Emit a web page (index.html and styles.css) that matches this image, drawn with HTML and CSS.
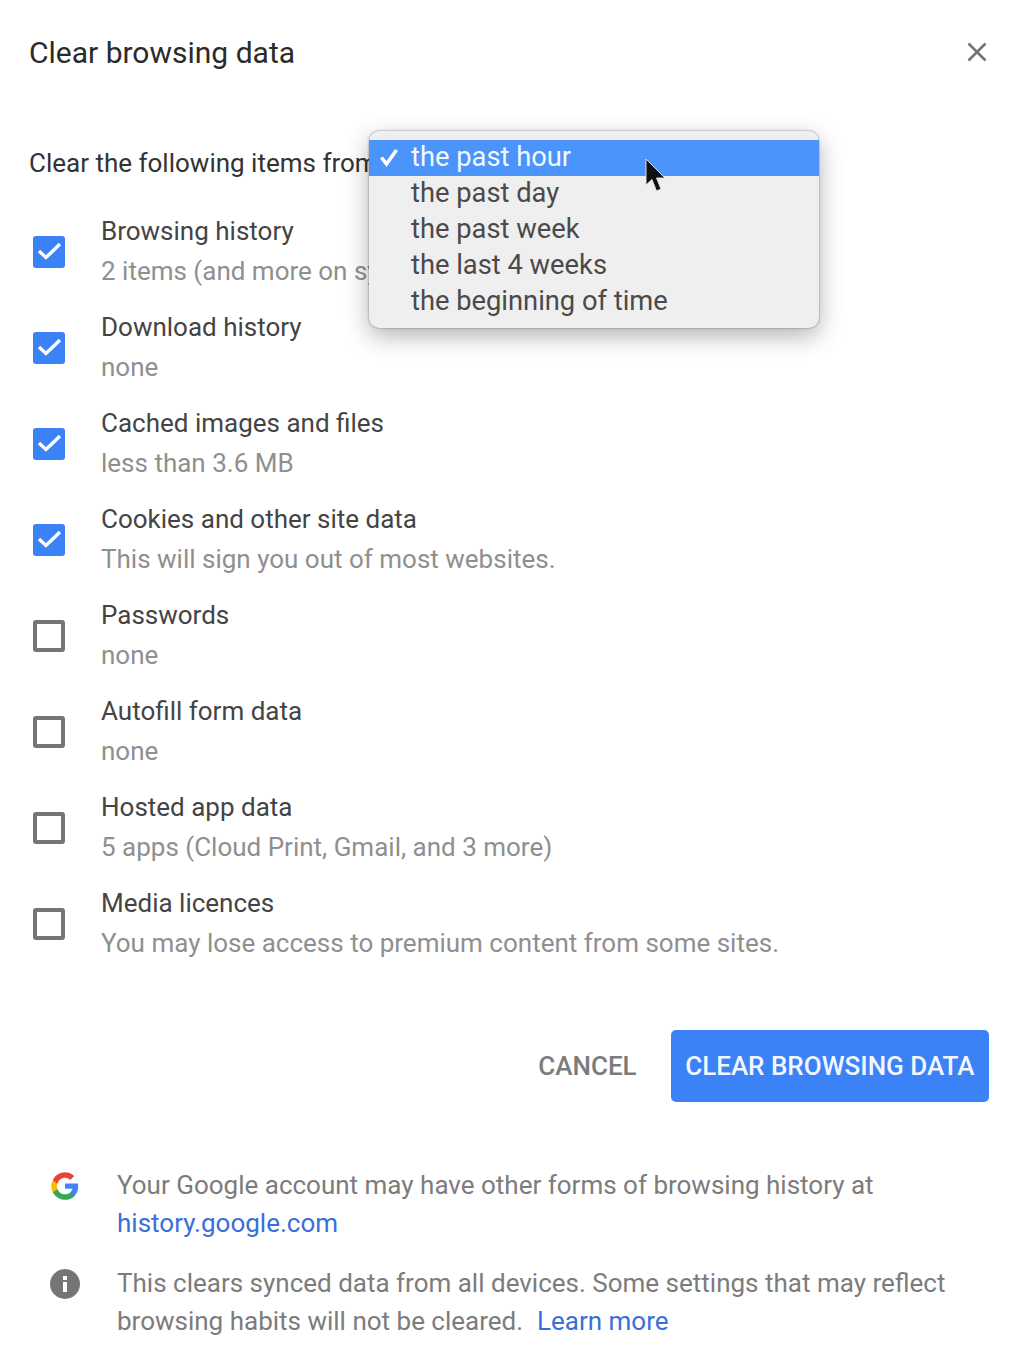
FILE: index.html
```html
<!DOCTYPE html>
<html lang="en">
<head>
    <meta charset="UTF-8">
    <meta name="viewport" content="width=device-width, initial-scale=1.0">
    <title>Clear browsing data</title>
    <link rel="stylesheet" href="styles.css">
</head>
<body>
    <div class="dialog">
        <div class="header">
            <h1>Clear browsing data</h1>
            <svg class="close" width="20" height="20" viewBox="0 0 20 20"><path d="M1.500 1.500L18.500 18.500M18.500 1.500L1.500 18.500" fill="none" stroke="#757575" stroke-width="2.600"/></svg>
        </div>

        <div class="range">Clear the following items from</div>

        <div class="items">
            <div class="item">
                <span class="box checked"><svg width="32" height="32" viewBox="0 0 32 32"><path d="M6 15L13 21.500L27 8" fill="none" stroke="#fff" stroke-width="3.400"/></svg></span>
                <div class="item-text"><div class="name">Browsing history</div><div class="sub">2 items (and more on synced devices)</div></div>
            </div>
            <div class="item">
                <span class="box checked"><svg width="32" height="32" viewBox="0 0 32 32"><path d="M6 15L13 21.500L27 8" fill="none" stroke="#fff" stroke-width="3.400"/></svg></span>
                <div class="item-text"><div class="name">Download history</div><div class="sub">none</div></div>
            </div>
            <div class="item">
                <span class="box checked"><svg width="32" height="32" viewBox="0 0 32 32"><path d="M6 15L13 21.500L27 8" fill="none" stroke="#fff" stroke-width="3.400"/></svg></span>
                <div class="item-text"><div class="name">Cached images and files</div><div class="sub">less than 3.6 MB</div></div>
            </div>
            <div class="item">
                <span class="box checked"><svg width="32" height="32" viewBox="0 0 32 32"><path d="M6 15L13 21.500L27 8" fill="none" stroke="#fff" stroke-width="3.400"/></svg></span>
                <div class="item-text"><div class="name">Cookies and other site data</div><div class="sub">This will sign you out of most websites.</div></div>
            </div>
            <div class="item">
                <span class="box"></span>
                <div class="item-text"><div class="name">Passwords</div><div class="sub">none</div></div>
            </div>
            <div class="item">
                <span class="box"></span>
                <div class="item-text"><div class="name">Autofill form data</div><div class="sub">none</div></div>
            </div>
            <div class="item">
                <span class="box"></span>
                <div class="item-text"><div class="name">Hosted app data</div><div class="sub">5 apps (Cloud Print, Gmail, and 3 more)</div></div>
            </div>
            <div class="item">
                <span class="box"></span>
                <div class="item-text"><div class="name">Media licences</div><div class="sub">You may lose access to premium content from some sites.</div></div>
            </div>
        </div>

        <div class="actions">
            <span class="cancel">CANCEL</span>
            <span class="clear">CLEAR BROWSING DATA</span>
        </div>

        <div class="notes">
            <div class="note">
                <svg class="note-icon" width="30" height="30" viewBox="0 0 48 48">
                    <path fill="#4285f4" d="M45.100 24.500c0-1.600-.1-3.100-.4-4.500H24v8.500h11.800c-.5 2.700-2.100 5-4.400 6.600v5.500h7.100c4.200-3.800 6.600-9.500 6.600-16.100z"/>
                    <path fill="#34a853" d="M24 46c5.900 0 10.900-2 14.500-5.400l-7.100-5.500c-2 1.300-4.500 2.100-7.400 2.100-5.700 0-10.500-3.800-12.200-9H4.500v5.700C8.100 41.100 15.500 46 24 46z"/>
                    <path fill="#fbbc05" d="M11.800 28.700c-.4-1.300-.7-2.800-.7-4.200s.3-2.900.7-4.200v-5.700H4.500C3 17.500 2 20.900 2 24.500s1 7 2.500 9.900l7.300-5.700z"/>
                    <path fill="#ea4335" d="M24 10.900c3.200 0 6.100 1.100 8.400 3.300l6.300-6.300C34.900 4.300 29.900 2 24 2 15.500 2 8.100 6.900 4.500 14.600l7.300 5.700c1.700-5.200 6.500-9.400 12.200-9.400z"/>
                </svg>
                <p>Your Google account may have other forms of browsing history at<br><a href="#">history.google.com</a></p>
            </div>
            <div class="note">
                <svg class="note-icon" width="30" height="30" viewBox="0 0 30 30">
                    <circle cx="15" cy="15" r="15" fill="#757575"/>
                    <rect x="13" y="13" width="4" height="10" fill="#fff"/>
                    <rect x="13" y="7" width="4" height="4" fill="#fff"/>
                </svg>
                <p>This clears synced data from all devices. Some settings that may reflect<br>browsing habits will not be cleared. &nbsp;<a class="learn" href="#">Learn more</a></p>
            </div>
        </div>
    </div>

    <!-- native select popup, sits on top of the dialog -->
    <div class="popup">
        <div class="opt active"><svg class="tick" width="20" height="20" viewBox="0 0 20 20"><path d="M2.500 10.500L7.500 17L17.500 3" fill="none" stroke="#fff" stroke-width="3.600"/></svg>the past hour</div>
        <div class="opt">the past day</div>
        <div class="opt">the past week</div>
        <div class="opt">the last 4 weeks</div>
        <div class="opt">the beginning of time</div>
    </div>
    <svg class="cursor" width="24" height="36" viewBox="0 0 24 36"><path d="M2 1V27L8 21.500L12.500 33L17 31L12.500 20H21Z" fill="#111" stroke="#ddd" stroke-width="1"/></svg>
</body>
</html>
```

FILE: styles.css
```css
body {
    margin: 0;
    background: #fff;
    font-family: Roboto, sans-serif;
    color: #333;
    overflow: hidden;
}
.dialog {
    padding: 32px 20px 0 29px;
}
.header {
    display: flex;
    justify-content: space-between;
    align-items: center;
    height: 40px;
}
.header h1 {
    margin: 0;
    font-size: 30px;
    font-weight: 400;
    color: #2b2b2b;
}
.close {
    margin-right: 2px;
}
.range {
    margin-top: 71px;
    height: 40px;
    line-height: 40px;
    font-size: 26px;
    color: #333;
    white-space: nowrap;
}
.items {
    margin-top: 20px;
}
.item {
    display: flex;
    align-items: center;
    height: 96px;
    padding-left: 4px;
}
.box {
    flex: none;
    box-sizing: border-box;
    width: 32px;
    height: 32px;
    margin-top: 2px;
    border: 4px solid #757575;
    border-radius: 3px;
    margin-right: 36px;
}
.box.checked {
    border: 0;
    background: #3b82f6;
}
.box svg {
    display: block;
}
.name {
    font-size: 26px;
    line-height: 40px;
    color: #444;
}
.sub {
    font-size: 26px;
    line-height: 40px;
    color: #8f8f8f;
    white-space: nowrap;
}
.actions {
    display: flex;
    justify-content: flex-end;
    align-items: center;
    gap: 34px;
    margin-top: 59px;
}
.cancel {
    font-size: 26px;
    font-weight: 500;
    color: #7c7c7c;
}
.clear {
    background: #3b82f6;
    color: #f2f7ff;
    font-size: 26px;
    font-weight: 500;
    height: 72px;
    line-height: 72px;
    padding: 0 14.5px;
    border-radius: 5px;
}
.notes {
    margin-top: 64px;
    padding-left: 21px;
}
.note {
    display: flex;
    margin-bottom: 22px;
}
.note-icon {
    flex: none;
    margin: 5px 37px 0 0;
    display: block;
}
.note p {
    margin: 0;
    font-size: 26px;
    line-height: 38px;
    color: #7c7c7c;
    white-space: nowrap;
}
.note a {
    color: #3a6fd8;
    text-decoration: none;
}
.note .learn {
    margin-left: 1px;
}
.popup {
    position: absolute;
    left: 369px;
    top: 131px;
    width: 450px;
    height: 197px;
    box-sizing: border-box;
    padding-top: 9px;
    background: #efefef;
    border-radius: 10px;
    box-shadow: 0 8px 24px rgba(0, 0, 0, 0.3), 0 0 2px rgba(0, 0, 0, 0.5);
    overflow: hidden;
}
.opt {
    position: relative;
    height: 36px;
    line-height: 34px;
    padding-left: 42px;
    font-size: 27.3px;
    color: #4a4a4a;
}
.opt.active {
    background: #4a94fb;
    color: #f4f9ff;
}
.tick {
    position: absolute;
    left: 10px;
    top: 7px;
}
.cursor {
    position: absolute;
    left: 644px;
    top: 158px;
}
```
